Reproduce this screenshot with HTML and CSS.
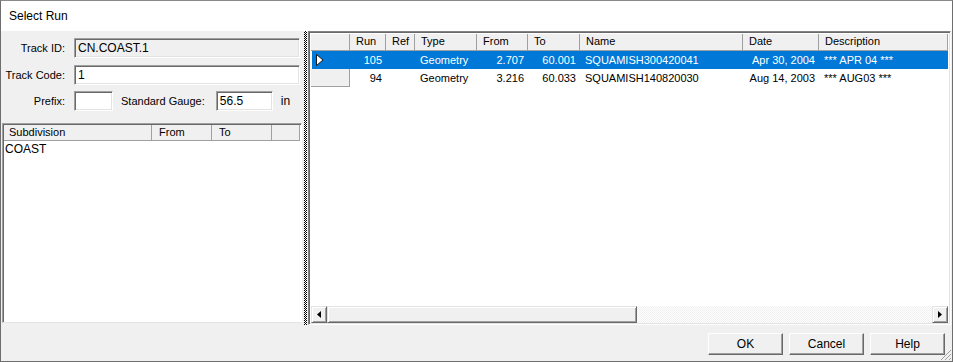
FILE: index.html
```html
<!DOCTYPE html>
<html lang="en">
<head>
    <meta charset="UTF-8">
    <title>Select Run</title>
    <link rel="stylesheet" href="styles.css">
</head>
<body>
    <div class="window">
        <div class="title-bar">Select Run</div>

        <div class="content">
            <div class="panes">
                <div class="left-pane">
                    <div class="form-row">
                        <div class="label">Track ID:</div>
                        <div class="textbox readonly wide">CN.COAST.1</div>
                    </div>
                    <div class="form-row">
                        <div class="label">Track Code:</div>
                        <div class="textbox wide">1</div>
                    </div>
                    <div class="form-row">
                        <div class="label">Prefix:</div>
                        <div class="textbox prefix"></div>
                        <div class="label gauge-label">Standard Gauge:</div>
                        <div class="textbox gauge">56.5</div>
                        <div class="unit">in</div>
                    </div>

                    <div class="sub-grid">
                        <div class="sub-header">
                            <div class="head-cell">Subdivision</div>
                            <div class="head-cell">From</div>
                            <div class="head-cell">To</div>
                            <div class="head-cell"></div>
                        </div>
                        <div class="sub-body">
                            <div class="sub-row">COAST</div>
                        </div>
                    </div>
                </div>

                <div class="splitter"></div>

                <div class="run-grid">
                    <div class="run-rows">
                        <div class="run-row run-header">
                            <div class="head-cell"></div>
                            <div class="head-cell">Run</div>
                            <div class="head-cell">Ref</div>
                            <div class="head-cell">Type</div>
                            <div class="head-cell">From</div>
                            <div class="head-cell">To</div>
                            <div class="head-cell">Name</div>
                            <div class="head-cell">Date</div>
                            <div class="head-cell">Description</div>
                        </div>
                        <div class="run-row selected">
                            <div class="indicator">
                                <svg viewBox="0 0 8 12" width="8" height="12">
                                    <polygon points="0.5,0.5 7,6 0.5,11.5" fill="#ffffff" stroke="#1a1a1a" stroke-width="1"></polygon>
                                </svg>
                            </div>
                            <div class="cell num">105</div>
                            <div class="cell"></div>
                            <div class="cell">Geometry</div>
                            <div class="cell num">2.707</div>
                            <div class="cell num">60.001</div>
                            <div class="cell">SQUAMISH300420041</div>
                            <div class="cell num">Apr 30, 2004</div>
                            <div class="cell">*** APR 04 ***</div>
                        </div>
                        <div class="run-row">
                            <div class="indicator"></div>
                            <div class="cell num">94</div>
                            <div class="cell"></div>
                            <div class="cell">Geometry</div>
                            <div class="cell num">3.216</div>
                            <div class="cell num">60.033</div>
                            <div class="cell">SQUAMISH140820030</div>
                            <div class="cell num">Aug 14, 2003</div>
                            <div class="cell">*** AUG03 ***</div>
                        </div>
                    </div>

                    <div class="h-scroll">
                        <div class="scroll-btn">
                            <svg viewBox="0 0 4 7" width="4" height="7"><polygon points="4,0 0,3.5 4,7" fill="#000"></polygon></svg>
                        </div>
                        <div class="scroll-thumb"></div>
                        <div class="scroll-track"></div>
                        <div class="scroll-btn">
                            <svg viewBox="0 0 4 7" width="4" height="7"><polygon points="0,0 4,3.5 0,7" fill="#000"></polygon></svg>
                        </div>
                    </div>
                </div>
            </div>

            <div class="footer">
                <div class="button">OK</div>
                <div class="button">Cancel</div>
                <div class="button">Help</div>
                <svg class="size-grip" viewBox="0 0 12 12" width="12" height="12">
                    <line x1="11" y1="1" x2="1" y2="11" stroke="#a0a0a0"></line>
                    <line x1="11" y1="5" x2="5" y2="11" stroke="#a0a0a0"></line>
                    <line x1="11" y1="9" x2="9" y2="11" stroke="#a0a0a0"></line>
                </svg>
            </div>
        </div>
    </div>
</body>
</html>
```

FILE: styles.css
```css
* {
    margin: 0;
    padding: 0;
    box-sizing: border-box;
}

body {
    font-family: "Liberation Sans", Arial, sans-serif;
    font-size: 11px;
    color: #000000;
    background: #ffffff;
}

.window {
    width: 953px;
    height: 362px;
    border: 1px solid #6e6e6e;
    border-top-color: #8a8a8a;
    display: flex;
    flex-direction: column;
    background: #F0F0F0;
}

.title-bar {
    height: 30px;
    background: #FFFFFF;
    padding-left: 8px;
    font-size: 12px;
    line-height: 30px;
}

.content {
    flex: 1;
    display: flex;
    flex-direction: column;
}

.panes {
    display: flex;
    height: 294px;
}

.left-pane {
    width: 303px;
    padding-top: 7px;
    display: flex;
    flex-direction: column;
}

.form-row {
    display: flex;
    align-items: center;
    height: 20px;
    margin-bottom: 7px;
}

.form-row:nth-child(2) {
    margin-bottom: 6px;
}

.form-row:nth-child(3) {
    margin-bottom: 12px;
}

.label {
    width: 66px;
    text-align: right;
    padding-right: 2px;
    margin-right: 7px;
}

.gauge-label {
    width: auto;
    margin-left: 8px;
    margin-right: 9px;
}

.textbox {
    height: 20px;
    background: #FFFFFF;
    border-top: 1px solid #a0a0a0;
    border-left: 1px solid #a0a0a0;
    border-right: 1px solid #ffffff;
    border-bottom: 1px solid #ffffff;
    box-shadow: inset 1px 1px 0 #696969, inset -1px -1px 0 #e3e3e3;
    padding: 2px 0 0 3px;
    line-height: 15px;
    font-size: 12px;
}

.textbox.readonly {
    background: #F0F0F0;
}

.textbox.wide {
    width: 226px;
}

.textbox.prefix {
    width: 39px;
}

.textbox.gauge {
    width: 57px;
}

.unit {
    margin-left: 8px;
    font-size: 12px;
}

.sub-grid {
    margin-left: 1px;
    margin-bottom: 2px;
    flex: 1;
    display: flex;
    flex-direction: column;
    border-top: 1px solid #a0a0a0;
    border-left: 1px solid #a0a0a0;
    border-right: 1px solid #ffffff;
    border-bottom: 1px solid #e3e3e3;
    box-shadow: inset 1px 1px 0 #696969;
    padding: 1px 1px 1px 1px;
    background: #FFFFFF;
}

.sub-header {
    display: grid;
    grid-template-columns: 148px 60px 60px 1fr;
    height: 16px;
}

.head-cell {
    background: #F0F0F0;
    border-right: 1px solid #a0a0a0;
    border-bottom: 1px solid #a0a0a0;
    padding-left: 7px;
    line-height: 15px;
    white-space: nowrap;
    overflow: hidden;
}

.sub-header .head-cell:first-child {
    padding-left: 5px;
}

.sub-body {
    flex: 1;
}

.sub-row {
    padding-left: 1px;
    font-size: 12px;
    line-height: 17px;
}

.splitter {
    width: 3px;
    margin: 0 1px 0 2px;
    background: repeating-conic-gradient(#000000 0 25%, #ffffff 0 50%) 0 0 / 2px 2px;
}

.run-grid {
    flex: 1;
    display: flex;
    flex-direction: column;
    border: 1px solid #828282;
    border-right-color: #ffffff;
    border-bottom-color: #ffffff;
    box-shadow: inset 1px 1px 0 #696969, inset -1px -1px 0 #e3e3e3;
    padding: 2px 2px 1px 2px;
    background: #FFFFFF;
    margin-right: 1px;
}

.run-rows {
    flex: 1;
}

.run-row {
    display: grid;
    grid-template-columns: 39px 36px 29px 62px 51px 52px 163px 76px 129px;
    height: 18px;
    line-height: 18px;
}

.run-header {
    height: 17px;
    line-height: 16px;
}

.run-header .head-cell {
    padding-left: 6px;
}

.indicator {
    background: #F0F0F0;
    border-right: 1px solid #a0a0a0;
    border-bottom: 1px solid #a0a0a0;
    display: flex;
    align-items: center;
    padding-left: 4px;
}

.cell {
    padding: 0 4px 0 5px;
    white-space: nowrap;
    overflow: hidden;
}

.cell.num {
    text-align: right;
}

.run-row.selected {
    background: #0078D7;
    color: #FFFFFF;
    margin-left: 1px;
    grid-template-columns: 38px 36px 29px 62px 51px 52px 163px 76px 129px;
}

.run-row.selected .indicator {
    background: #0078D7;
    border-color: #0078D7;
}

.h-scroll {
    height: 17px;
    display: flex;
    background: #F0F0F0;
}

.scroll-btn {
    width: 16px;
    height: 17px;
    background: #F0F0F0;
    border-top: 1px solid #e3e3e3;
    border-left: 1px solid #e3e3e3;
    border-right: 1px solid #696969;
    border-bottom: 1px solid #696969;
    box-shadow: inset 1px 1px 0 #ffffff, inset -1px -1px 0 #a0a0a0;
    display: flex;
    align-items: center;
    justify-content: center;
}

.scroll-thumb {
    width: 310px;
    background: #F0F0F0;
    border-top: 1px solid #e3e3e3;
    border-left: 1px solid #e3e3e3;
    border-right: 1px solid #696969;
    border-bottom: 1px solid #696969;
    box-shadow: inset 1px 1px 0 #ffffff, inset -1px -1px 0 #a0a0a0;
}

.scroll-track {
    flex: 1;
    background: repeating-conic-gradient(#f0f0f0 0 25%, #ffffff 0 50%) 0 0 / 2px 2px;
}

.footer {
    flex: 1;
    display: flex;
    justify-content: flex-end;
    align-items: flex-start;
    gap: 6px;
    padding: 8px 7px 0 0;
    position: relative;
}

.button {
    width: 75px;
    height: 22px;
    background: #F0F0F0;
    border-top: 1px solid #ffffff;
    border-left: 1px solid #ffffff;
    border-right: 1px solid #696969;
    border-bottom: 1px solid #696969;
    box-shadow: inset -1px -1px 0 #a0a0a0;
    text-align: center;
    line-height: 20px;
    font-size: 12px;
}

.size-grip {
    position: absolute;
    right: 0;
    bottom: 0;
}
```
